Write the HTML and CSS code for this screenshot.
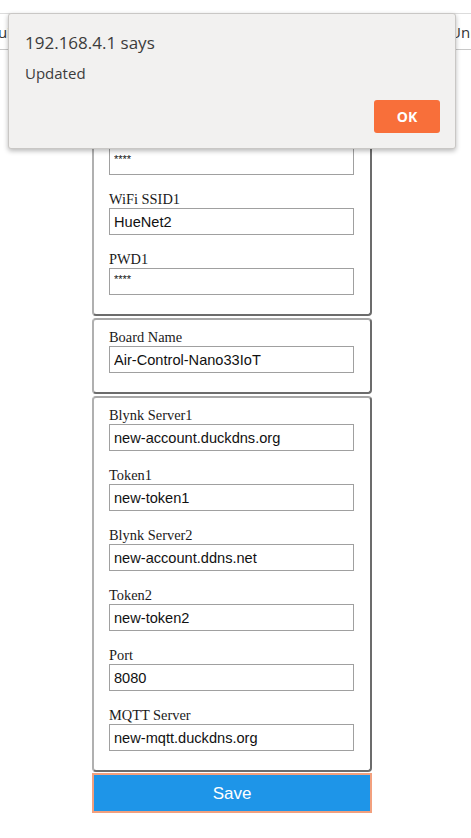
FILE: index.html
```html
<!DOCTYPE html>
<html>
<head>
<meta charset="utf-8">
<link rel="stylesheet" href="styles.css">
</head>
<body>
<nav class="topnav">
  <span class="nav-item nav-left">Gui</span>
  <span class="nav-item nav-right">Uni</span>
</nav>
<form class="config">
  <fieldset class="group">
    <label class="lbl">WiFi SSID</label>
    <input class="field" type="text" value="HueNet1">
    <label class="lbl">PWD</label>
    <input class="field pwd" type="text" value="****">
    <label class="lbl">WiFi SSID1</label>
    <input class="field" type="text" value="HueNet2">
    <label class="lbl">PWD1</label>
    <input class="field pwd" type="text" value="****">
  </fieldset>
  <fieldset class="group">
    <label class="lbl">Board Name</label>
    <input class="field" type="text" value="Air-Control-Nano33IoT">
  </fieldset>
  <fieldset class="group">
    <label class="lbl">Blynk Server1</label>
    <input class="field" type="text" value="new-account.duckdns.org">
    <label class="lbl">Token1</label>
    <input class="field" type="text" value="new-token1">
    <label class="lbl">Blynk Server2</label>
    <input class="field" type="text" value="new-account.ddns.net">
    <label class="lbl">Token2</label>
    <input class="field" type="text" value="new-token2">
    <label class="lbl">Port</label>
    <input class="field" type="text" value="8080">
    <label class="lbl">MQTT Server</label>
    <input class="field" type="text" value="new-mqtt.duckdns.org">
  </fieldset>
  <button class="save" type="button">Save</button>
</form>
<div class="dialog">
  <div class="dlg-title">192.168.4.1 says</div>
  <div class="dlg-msg">Updated</div>
  <div class="dlg-actions"><button class="ok" type="button">OK</button></div>
</div>
</body>
</html>
```
FILE: styles.css
```css
html, body {
  margin: 0;
  padding: 0;
  background: #ffffff;
}
body {
  font-family: "Liberation Serif", serif;
}
.topnav {
  margin-top: 13px;
  height: 35px;
  border-top: 1px solid #dcdcdc;
  border-bottom: 1px solid #c8c8c8;
  display: flex;
  justify-content: space-between;
  align-items: center;
  overflow: hidden;
  font-family: "Open Sans", "Noto Sans", sans-serif;
  font-size: 15px;
  color: #333;
}
.nav-left { margin-left: -13px; }
.nav-right { margin-right: -3px; }
.config {
  width: 280px;
  margin: 10px 0 0 92px;
}
.group {
  margin: 0 0 2px 0;
  padding: 9px 16px 3px 15px;
  border-width: 2px;
  border-style: solid;
  border-color: #a8a8a8 #6c6c6c #6c6c6c #b0b0b0;
  border-radius: 4px;
  min-width: 0;
}
.lbl {
  display: block;
  height: 17px;
  font-size: 14.4px;
  line-height: 17px;
  color: #1a1a1a;
}
.field {
  display: block;
  box-sizing: border-box;
  width: 100%;
  height: 27px;
  margin: 0 0 16px 0;
  padding: 0 4px;
  border: 1px solid #a0a0a0;
  font-family: "Liberation Sans", Arial, sans-serif;
  font-size: 14.6px;
  color: #111;
  background: #fff;
}
.pwd {
  font-size: 11px;
  padding-bottom: 6px;
}
.save {
  display: block;
  box-sizing: border-box;
  width: 280px;
  height: 40px;
  margin: -1px 0 0 0;
  padding-top: 3px;
  background: #1e95e8;
  border: 2px solid #f2a07e;
  color: #ffffff;
  font-family: "Liberation Sans", Arial, sans-serif;
  font-size: 17px;
}
.dialog {
  position: absolute;
  left: 8px;
  top: 13px;
  width: 446px;
  height: 134px;
  box-sizing: content-box;
  background: #f2f1f0;
  border: 1px solid #c9c7c5;
  border-radius: 3px;
  box-shadow: 0 2px 5px rgba(0, 0, 0, 0.28);
  font-family: "Open Sans", "Noto Sans", sans-serif;
  color: #3c3c3c;
  display: flex;
  flex-direction: column;
}
.dlg-title {
  margin: 17px 0 0 16px;
  font-size: 17px;
  line-height: 24px;
}
.dlg-msg {
  margin: 8px 0 0 16px;
  font-size: 15px;
  line-height: 20px;
}
.dlg-actions {
  margin-top: auto;
  padding: 0 15px 15px 0;
  display: flex;
  justify-content: flex-end;
}
.ok {
  width: 66px;
  height: 33px;
  background: #f86f3a;
  border: none;
  border-radius: 3px;
  color: #fff;
  font-family: "Open Sans", "Noto Sans", sans-serif;
  font-weight: 700;
  font-size: 14px;
}
```
